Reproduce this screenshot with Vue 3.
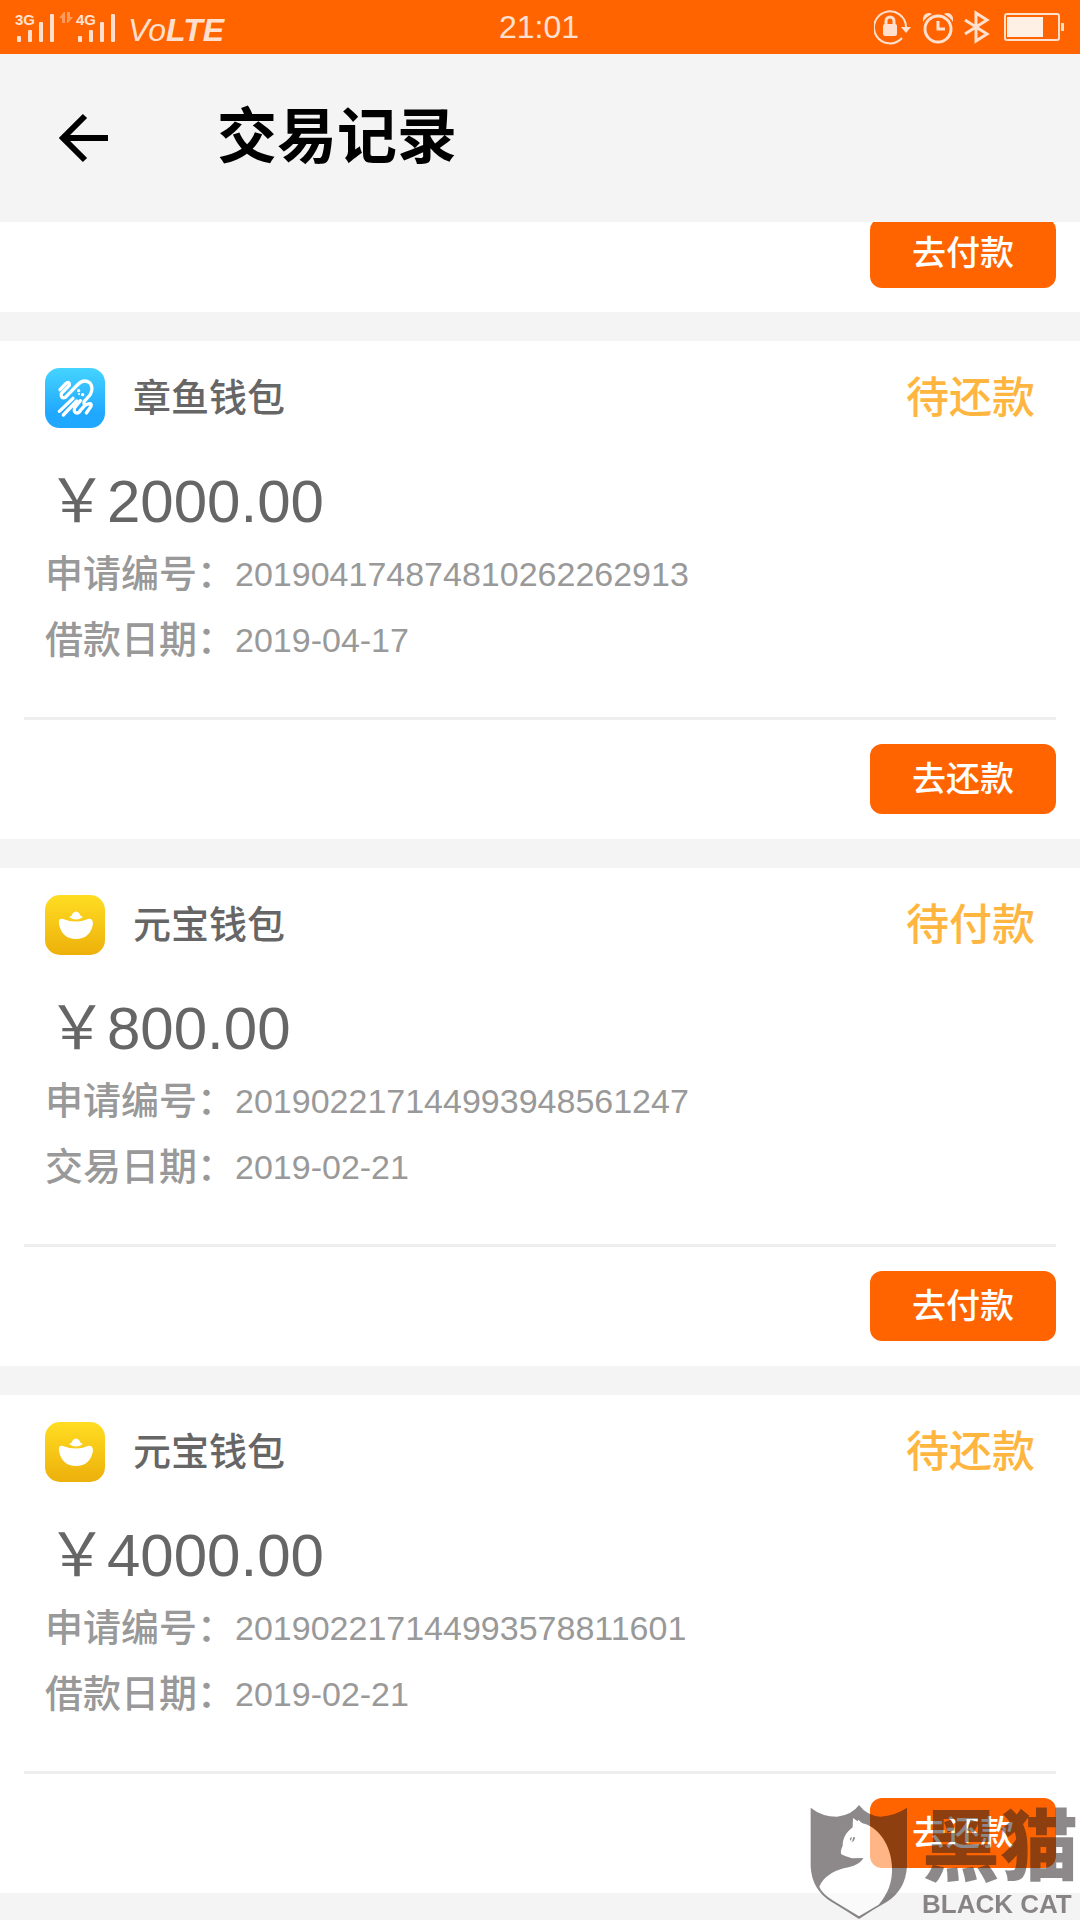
<script setup>
const records = [
  {
    id: 1, icon: 'octopus', name: '章鱼钱包', status: '待还款', amount: '￥2000.00',
    number: '201904174874810262262913', dateLabel: '借款日期：', date: '2019-04-17', action: '去还款',
  },
  {
    id: 2, icon: 'ingot', name: '元宝钱包', status: '待付款', amount: '￥800.00',
    number: '201902217144993948561247', dateLabel: '交易日期：', date: '2019-02-21', action: '去付款',
  },
  {
    id: 3, icon: 'ingot', name: '元宝钱包', status: '待还款', amount: '￥4000.00',
    number: '201902217144993578811601', dateLabel: '借款日期：', date: '2019-02-21', action: '去还款',
  },
]
</script>

<template>
  <div class="app">
    <div class="status-bar">
      <div class="signals">
        <svg class="signal" width="106" height="54" viewBox="14 0 106 54" aria-hidden="true">
          <g fill="#ffe0cf">
            <text x="15" y="25" font-size="15" font-weight="bold">3G</text>
            <rect x="17" y="36" width="4" height="6" rx="1" />
            <rect x="28" y="30" width="4" height="12" rx="1" />
            <rect x="39" y="22" width="4" height="20" rx="1" />
            <rect x="50" y="14" width="4" height="28" rx="1" />
            <text x="76" y="25" font-size="15" font-weight="bold">4G</text>
            <rect x="78" y="36" width="4" height="6" rx="1" />
            <rect x="89" y="30" width="4" height="12" rx="1" />
            <rect x="100" y="22" width="4" height="20" rx="1" />
            <rect x="111" y="14" width="4" height="28" rx="1" />
          </g>
          <path d="M59 18L64 12H65V23H62V18ZM67 12H70V17H73L68 23H67Z" fill="#ff9a5c" />
        </svg>
        <span class="volte">Vo<b>LTE</b></span>
      </div>
      <time class="clock">21:01</time>
      <div class="indicators">
        <svg width="38" height="36" viewBox="0 0 38 36" aria-hidden="true">
          <path d="M28 29A16 16 0 1 1 32 18" fill="none" stroke="#ffe0cf" stroke-width="2" />
          <path d="M27 18H37L32 24Z" fill="#ffe0cf" />
          <rect x="9" y="15" width="14" height="12" rx="2" fill="#ffe0cf" />
          <path d="M12 16V12A4 4 0 0 1 20 12V16" fill="none" stroke="#ffe0cf" stroke-width="3" />
        </svg>
        <svg width="32" height="36" viewBox="0 0 32 36" aria-hidden="true">
          <circle cx="16" cy="20" r="13" fill="none" stroke="#ffe0cf" stroke-width="3" />
          <path d="M16 12V20H23" fill="none" stroke="#ffe0cf" stroke-width="3" />
          <path d="M1 13Q0 5 6 4Q9 4 10 5Q4 8 1 13ZM31 13Q32 5 26 4Q23 4 22 5Q28 8 31 13Z" fill="#ffe0cf" />
        </svg>
        <svg width="26" height="36" viewBox="0 0 26 36" aria-hidden="true">
          <path d="M1 11L23 25L12 32V4L23 11L1 25" fill="none" stroke="#ffe0cf" stroke-width="3" />
        </svg>
        <svg class="battery" width="60" height="28" viewBox="0 0 60 28" aria-hidden="true">
          <rect x="1" y="1" width="54" height="26" rx="2" fill="none" stroke="#ffe0cf" stroke-width="2" />
          <rect x="3" y="4" width="36" height="20" fill="#fff0e6" />
          <rect x="57" y="10" width="3" height="8" fill="#ffe0cf" />
        </svg>
      </div>
    </div>

    <header class="nav">
      <button class="back" type="button" aria-label="返回">
        <svg width="50" height="50" viewBox="0 0 50 50" aria-hidden="true">
          <path d="M49 25H5M26 3L4 25L26 47" fill="none" stroke="#000" stroke-width="6" />
        </svg>
      </button>
      <h1>交易记录</h1>
    </header>

    <main class="records">
      <section class="record partial">
        <button class="action" type="button">去付款</button>
      </section>

      <article v-for="r in records" :key="r.id" class="record">
        <div class="head">
          <svg v-if="r.icon === 'octopus'" class="logo" viewBox="15 15 180 180" aria-hidden="true">
            <defs>
              <linearGradient id="blue" x1="0" y1="0" x2="0" y2="1">
                <stop offset="0" stop-color="#45d4ff" />
                <stop offset="0.75" stop-color="#20a8ff" />
              </linearGradient>
            </defs>
            <rect x="15" y="15" width="180" height="180" rx="44" fill="url(#blue)" />
            <g fill="none" stroke="#fff" stroke-width="10" stroke-linecap="round" stroke-linejoin="round">
              <path d="M60 80L78 61Q90 54 88 67L64 92Q61 108 76 103L112 66Q132 46 150 60Q162 75 150 96L132 116Q130 129 142 124Q156 118 153 130L139 150" />
              <path d="M58 145L99 106" />
              <path d="M70 156L110 114" />
              <path d="M121 113L104 134Q100 149 110 150Q118 150 122 141L135 127" />
            </g>
            <g fill="#fff">
              <circle cx="116" cy="83" r="5" />
              <circle cx="128" cy="95" r="5" />
              <circle cx="117" cy="93" r="3" />
            </g>
          </svg>
          <svg v-else class="logo" viewBox="0 0 60 60" aria-hidden="true">
            <defs>
              <linearGradient id="gold" x1="0" y1="0" x2="0" y2="1">
                <stop offset="0" stop-color="#ffdd22" />
                <stop offset="1" stop-color="#edb00b" />
              </linearGradient>
            </defs>
            <rect width="60" height="60" rx="15" fill="url(#gold)" />
            <path d="M14 29Q13 23 18 24Q31 29 43 24Q48 23 48 29Q45 44 31 44Q17 44 14 29Z" fill="#fff" />
            <path d="M24 22Q27 21 28 18Q31 15 34 18Q35 21 38 22Q31 27 24 22Z" fill="#fff" />
          </svg>
          <h2>{{ r.name }}</h2>
          <span class="state">{{ r.status }}</span>
        </div>
        <p class="amount">{{ r.amount }}</p>
        <dl class="details">
          <div><dt>申请编号：</dt><dd>{{ r.number }}</dd></div>
          <div><dt>{{ r.dateLabel }}</dt><dd>{{ r.date }}</dd></div>
        </dl>
        <div class="foot">
          <button class="action" type="button">{{ r.action }}</button>
        </div>
      </article>
    </main>

    <div class="watermark">
      <svg width="98" height="116" viewBox="14 27 294 348" aria-hidden="true">
        <path d="M16 38Q50 65 95 65Q140 60 161 30Q185 62 225 65Q270 62 305 38V215Q300 285 245 320Q200 345 161 372Q120 345 78 320Q20 285 16 215Z" fill="#251e20" />
        <path d="M143 69L157 79L160 74Q166 84 180 87C220 100 257 150 260 215C262 265 245 300 220 329L161 364L84 317Q49 295 42 275C55 245 85 228 115 220C150 213 165 205 174 189L140 190Q120 185 108 178Q104 168 112 152C112 130 122 112 142 97Z" fill="#fff" />
        <path d="M133 132Q136 124 149 127Q148 139 139 141Z" fill="#251e20" />
        <path d="M142 126L138 140" stroke="#fff" stroke-width="4" />
      </svg>
      <div class="brand">
        <strong>黑猫</strong>
        <span>BLACK CAT</span>
      </div>
    </div>
  </div>
</template>

<style>
body {
  margin: 0;
  background: #f4f4f4;
}
</style>

<style scoped>
.app {
  font-family: "Liberation Sans", "Noto Sans CJK SC", sans-serif;
  min-height: 100vh;
  color: #666;
}

h1, h2, p, dl, dd {
  margin: 0;
}

button {
  border: 0;
  padding: 0;
  font-family: inherit;
}

svg {
  display: block;
}

.status-bar {
  display: grid;
  grid-template-columns: 1fr auto 1fr;
  align-items: center;
  height: 54px;
  padding: 0 16px 0 14px;
  background: #ff6400;
  color: #ffe0cf;
}

.signals {
  display: flex;
  align-items: center;
  gap: 8px;
}

.volte {
  padding-top: 6px;
  font-size: 32px;
  line-height: 48px;
  font-style: italic;
}

.clock {
  font-size: 32px;
  line-height: 54px;
}

.indicators {
  display: flex;
  align-items: center;
  justify-content: flex-end;
  gap: 10px;
}

.battery {
  margin-left: 4px;
}

.nav {
  display: flex;
  align-items: center;
  gap: 108px;
  height: 168px;
  padding: 0 59px;
}

.back {
  background: none;
}

h1 {
  font-size: 60px;
  line-height: 168px;
  font-weight: 700;
  color: #000;
}

.records {
  display: flex;
  flex-direction: column;
  gap: 29px;
}

.record {
  background: #fff;
}

.partial {
  display: flex;
  align-items: flex-end;
  justify-content: flex-end;
  box-sizing: border-box;
  height: 90px;
  padding: 0 24px 24px;
  overflow: hidden;
}

.head {
  display: flex;
  align-items: center;
  height: 114px;
  padding: 0 45px;
}

.logo {
  width: 60px;
  height: 60px;
  margin-right: 28px;
}

h2 {
  font-size: 38px;
  line-height: 60px;
  font-weight: 500;
}

.state {
  margin-left: auto;
  font-size: 43px;
  line-height: 60px;
  font-weight: 500;
  color: #ffb640;
}

.amount {
  padding: 8px 47px 0;
  font-size: 60px;
  line-height: 78px;
}

.details {
  margin: 0 24px;
  padding: 0 21px 44px;
  border-bottom: 3px solid #eee;
  color: #999;
}

.details div {
  display: flex;
  line-height: 66px;
}

dt {
  font-size: 38px;
  font-weight: 500;
}

dd {
  font-size: 34px;
}

.foot {
  display: flex;
  justify-content: flex-end;
  padding: 24px 24px 25px;
}

.action {
  flex: none;
  width: 186px;
  height: 70px;
  border-radius: 12px;
  background: #ff6400;
  color: #fff;
  font-size: 34px;
  line-height: 66px;
  font-weight: 500;
}

.watermark {
  position: fixed;
  right: 2px;
  bottom: 0;
  display: flex;
  align-items: flex-end;
  gap: 14px;
  opacity: 0.52;
  color: #251e20;
  pointer-events: none;
}

.brand {
  display: flex;
  flex-direction: column;
  font-weight: 700;
}

.brand strong {
  font-size: 78px;
  line-height: 80px;
}

.brand span {
  font-size: 26px;
  line-height: 32px;
}
</style>
